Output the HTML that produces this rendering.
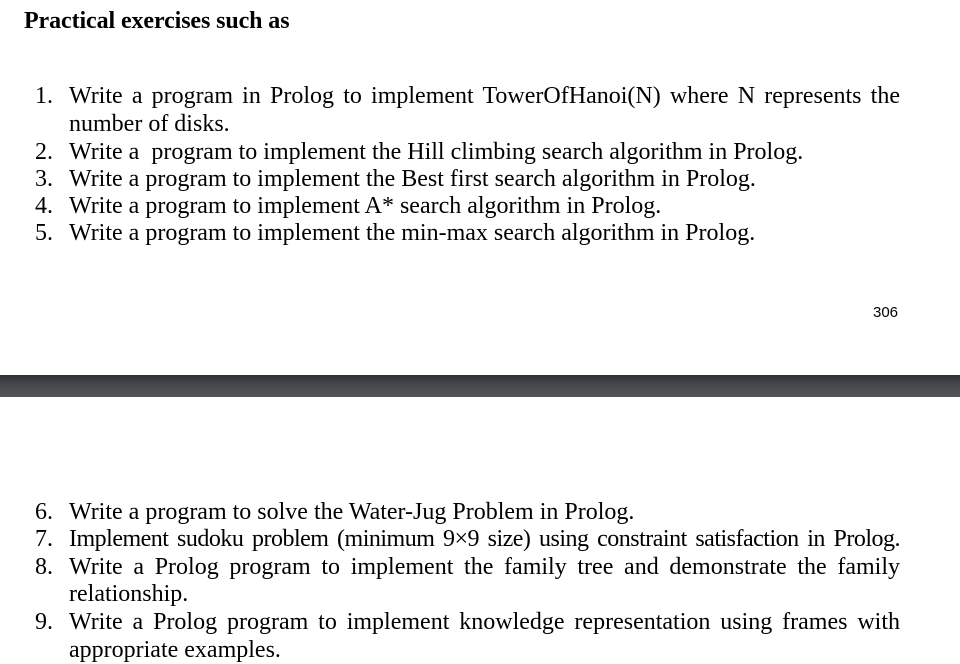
<!DOCTYPE html>
<html><head><meta charset="utf-8"><style>
body{margin:0;width:960px;height:660px;background:#fff;position:relative;overflow:hidden;font-family:"Liberation Serif",serif;color:#000}
.l{position:absolute;font-size:24px;line-height:28px;white-space:nowrap}
.n{position:absolute;left:35px;font-size:24px;line-height:28px}
.j{width:831px;text-align:justify;text-align-last:justify;white-space:normal}
h1{position:absolute;left:24px;top:7px;margin:0;font-size:24px;font-weight:bold;line-height:28px;letter-spacing:-0.1px}
.bar{position:absolute;left:0;top:375px;width:960px;height:22px;background:linear-gradient(#2e3032,#45484b 40%,#53575a)}
.pg{position:absolute;left:873px;top:304px;font-family:"Liberation Sans",sans-serif;font-size:15px}
</style></head><body>
<h1>Practical exercises such as</h1>
<div class="n" style="top:82px">1.</div><div class="l j" style="left:69px;top:82px">Write a program in Prolog to implement TowerOfHanoi(N) where N represents the</div>
<div class="l" style="left:69px;top:110px">number of disks.</div>
<div class="n" style="top:138px">2.</div><div class="l" style="left:69px;top:138px">Write a &nbsp;program to implement the Hill climbing search algorithm in Prolog.</div>
<div class="n" style="top:165px">3.</div><div class="l" style="left:69px;top:165px">Write a program to implement the Best first search algorithm in Prolog.</div>
<div class="n" style="top:192px">4.</div><div class="l" style="left:69px;top:192px">Write a program to implement A* search algorithm in Prolog.</div>
<div class="n" style="top:219px">5.</div><div class="l" style="left:69px;top:219px">Write a program to implement the min-max search algorithm in Prolog.</div>
<div class="pg">306</div>
<div class="bar"></div>
<div class="n" style="top:498px">6.</div><div class="l" style="left:69px;top:498px">Write a program to solve the Water-Jug Problem in Prolog.</div>
<div class="n" style="top:525px">7.</div><div class="l j" style="left:69px;top:525px;letter-spacing:-0.5px">Implement sudoku problem (minimum 9×9 size) using constraint satisfaction in Prolog.</div>
<div class="n" style="top:553px">8.</div><div class="l j" style="left:69px;top:553px">Write a Prolog program to implement the family tree and demonstrate the family</div>
<div class="l" style="left:69px;top:580px">relationship.</div>
<div class="n" style="top:608px">9.</div><div class="l j" style="left:69px;top:608px">Write a Prolog program to implement knowledge representation using frames with</div>
<div class="l" style="left:69px;top:636px">appropriate examples.</div>
</body></html>
